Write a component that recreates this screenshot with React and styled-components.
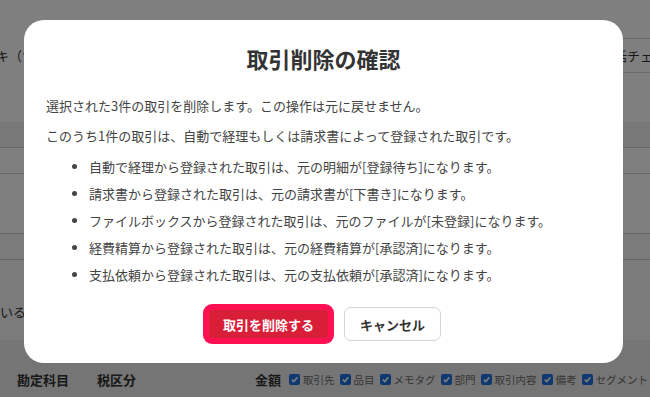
import React from "react";
import styled, { createGlobalStyle } from "styled-components";

const GlobalStyle = createGlobalStyle`
  html, body {
    margin: 0;
    padding: 0;
    overflow: hidden;
    background: #ffffff;
  }
  body {
    font-family: "Noto Sans CJK JP", "Noto Sans", sans-serif;
    color: #333;
  }
  * {
    box-sizing: border-box;
  }
`;

const Page = styled.div`
  width: 650px;
  height: 397px;
  display: flex;
  flex-direction: column;
  background: #ffffff;
  overflow: hidden;
`;

const FilterRow = styled.div`
  display: flex;
  align-items: center;
  height: 35px;
  margin-top: 38px;
  font-size: 13px;
  color: #333;
`;

const FilterLabel = styled.span`
  white-space: nowrap;
  margin-left: -4px;
`;

const CheckAllBox = styled.div`
  margin-left: auto;
  margin-right: -60px;
  flex-shrink: 0;
  width: 120px;
  height: 35px;
  display: flex;
  align-items: center;
  padding-left: 10px;
  border-top: 1px solid #d6d6d6;
  border-bottom: 1px solid #d6d6d6;
  border-left: 1px solid #d6d6d6;
  white-space: nowrap;
`;

const Band = styled.div`
  height: 26px;
  margin-top: 49px;
  background: #f0f0f0;
  border-bottom: 1px solid #cfcfcf;
`;

const TableRow = styled.div`
  height: ${(p) => p.$h}px;
  background: ${(p) => (p.$shade ? "#f6f6f6" : "#ffffff")};
  border-bottom: 1px solid #cfcfcf;
`;

const NoticeRow = styled.div`
  height: 80px;
  display: flex;
  align-items: flex-end;
  padding-bottom: 19px;
  font-size: 13px;
  color: #333;
  background: #f6f6f6;
  white-space: nowrap;
`;

const HeaderRow = styled.div`
  flex: 1;
  display: flex;
  align-items: center;
  padding-top: 22px;
  padding-left: 17px;
  background: #ebebeb;
  white-space: nowrap;
`;

const HeadCell = styled.span`
  width: ${(p) => p.$w}px;
  flex-shrink: 0;
  font-size: 13px;
  font-weight: 700;
  color: #333;
`;

const ToggleList = styled.div`
  display: flex;
  align-items: center;
  gap: 5px;
  margin-left: 12px;
`;

const Toggle = styled.label`
  display: flex;
  align-items: center;
  gap: 3px;
  font-size: 10.5px;
  color: #6a6a6a;
`;

const Box = styled.span`
  width: 11px;
  height: 11px;
  border-radius: 2px;
  background: #1f6fe0;
  display: inline-flex;
  align-items: center;
  justify-content: center;
`;

const Overlay = styled.div`
  position: fixed;
  inset: 0;
  background: rgba(0, 0, 0, 0.5);
  display: flex;
  justify-content: center;
  align-items: flex-start;
  padding-top: 20px;
  padding-right: 3px;
`;

const Modal = styled.div`
  width: 599px;
  height: 343px;
  background: #ffffff;
  border-radius: 20px;
  padding: 22px 22px 0 22px;
  display: flex;
  flex-direction: column;
`;

const Title = styled.h2`
  margin: 0;
  text-align: center;
  font-size: 22px;
  line-height: 32px;
  font-weight: 700;
  color: #333;
`;

const Body = styled.div`
  margin-top: 22px;
  font-size: 13px;
  line-height: 20px;
  color: #444;
`;

const Para = styled.p`
  margin: 0 0 10px 0;
`;

const Bullets = styled.ul`
  margin: 11px 0 0 0;
  padding-left: 43px;

  li {
    margin-bottom: 7px;
  }
  li:last-child {
    margin-bottom: 0;
  }
`;

const Actions = styled.div`
  display: flex;
  justify-content: center;
  gap: 13px;
  margin-top: 22px;
`;

const DangerButton = styled.button`
  width: 125px;
  height: 34px;
  border-radius: 6px;
  border: 3px solid #ff1052;
  box-shadow: 0 0 0 3px #ff1052;
  background: #d91f38;
  color: #ffffff;
  font-family: inherit;
  font-size: 13px;
  font-weight: 700;
  cursor: pointer;
`;

const CancelButton = styled.button`
  width: 97px;
  height: 34px;
  border-radius: 7px;
  border: 1px solid #d4d4d4;
  background: #ffffff;
  color: #333;
  font-family: inherit;
  font-size: 13px;
  font-weight: 700;
  cursor: pointer;
`;

const toggles = ["取引先", "品目", "メモタグ", "部門", "取引内容", "備考", "セグメント"];

const items = [
  "自動で経理から登録された取引は、元の明細が[登録待ち]になります。",
  "請求書から登録された取引は、元の請求書が[下書き]になります。",
  "ファイルボックスから登録された取引は、元のファイルが[未登録]になります。",
  "経費精算から登録された取引は、元の経費精算が[承認済]になります。",
  "支払依頼から登録された取引は、元の支払依頼が[承認済]になります。",
];

const Check = () => (
  <svg width="9" height="9" viewBox="0 0 10 10">
    <path d="M2 5.2 L4.2 7.3 L8.2 2.6" fill="none" stroke="#fff" strokeWidth="1.8" />
  </svg>
);

const App = () => {
  return (
    <>
      <GlobalStyle />
      <Page>
        <FilterRow>
          <FilterLabel>キ（すべて）</FilterLabel>
          <CheckAllBox>一括チェック</CheckAllBox>
        </FilterRow>
        <Band />
        <TableRow $h={26} />
        <TableRow $h={60} />
        <TableRow $h={26} $shade />
        <NoticeRow>いる取引があります</NoticeRow>
        <HeaderRow>
          <HeadCell $w={80}>勘定科目</HeadCell>
          <HeadCell $w={158}>税区分</HeadCell>
          <HeadCell $w={22}>金額</HeadCell>
          <ToggleList>
            {toggles.map((t) => (
              <Toggle key={t}>
                <Box>
                  <Check />
                </Box>
                {t}
              </Toggle>
            ))}
          </ToggleList>
        </HeaderRow>
      </Page>

      <Overlay>
        <Modal>
          <Title>取引削除の確認</Title>
          <Body>
            <Para>選択された3件の取引を削除します。この操作は元に戻せません。</Para>
            <Para>このうち1件の取引は、自動で経理もしくは請求書によって登録された取引です。</Para>
            <Bullets>
              {items.map((it) => (
                <li key={it}>{it}</li>
              ))}
            </Bullets>
          </Body>
          <Actions>
            <DangerButton>取引を削除する</DangerButton>
            <CancelButton>キャンセル</CancelButton>
          </Actions>
        </Modal>
      </Overlay>
    </>
  );
};

export default App;
